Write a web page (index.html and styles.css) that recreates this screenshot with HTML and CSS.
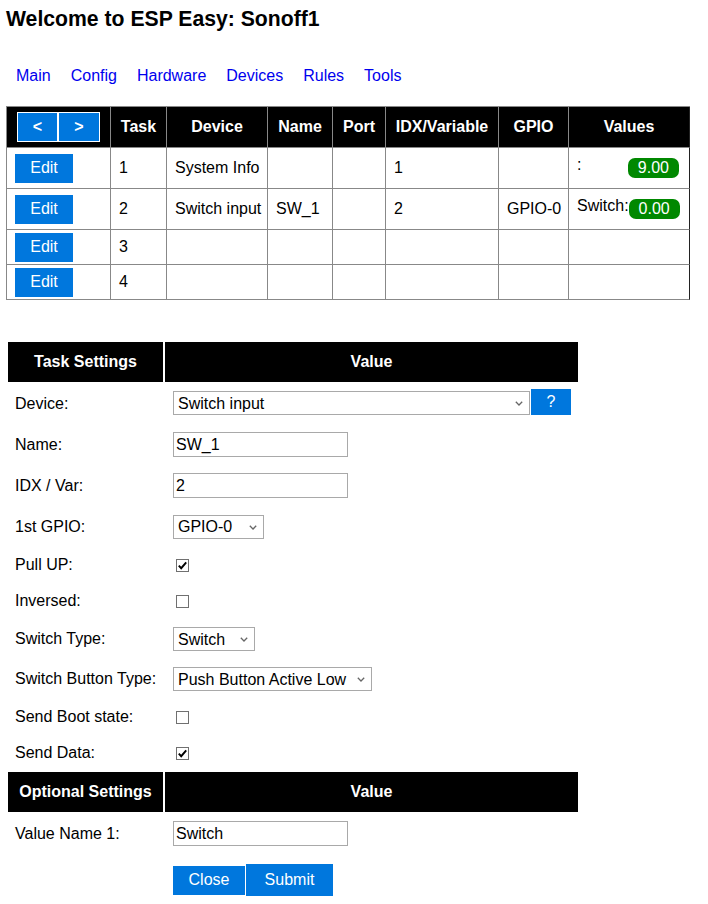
FILE: index.html
```html
<!DOCTYPE html>
<html>
<head>
<meta charset="utf-8">
<title>ESP Easy: Sonoff1</title>
<link rel="stylesheet" href="styles.css">
</head>
<body>
<div class="page">
  <h1 class="title">Welcome to ESP Easy: Sonoff1</h1>
  <nav class="menu">
    <a href="#">Main</a>
    <a href="#">Config</a>
    <a href="#">Hardware</a>
    <a href="#">Devices</a>
    <a href="#">Rules</a>
    <a href="#">Tools</a>
  </nav>

  <table class="tasks">
    <tr class="head">
      <th class="w-nav"><span class="pager"><a class="pg" href="#">&lt;</a><a class="pg" href="#">&gt;</a></span></th>
      <th class="w-task">Task</th>
      <th class="w-dev">Device</th>
      <th class="w-name">Name</th>
      <th class="w-port">Port</th>
      <th class="w-idx">IDX/Variable</th>
      <th class="w-gpio">GPIO</th>
      <th class="w-val last">Values</th>
    </tr>
    <tr class="tall">
      <td><a class="btn edit" href="#">Edit</a></td>
      <td>1</td>
      <td>System Info</td>
      <td></td>
      <td></td>
      <td>1</td>
      <td></td>
      <td class="last"><div class="vals"><span class="vl">:</span><span class="badge">9.00</span></div></td>
    </tr>
    <tr class="tall">
      <td><a class="btn edit" href="#">Edit</a></td>
      <td>2</td>
      <td>Switch input</td>
      <td>SW_1</td>
      <td></td>
      <td>2</td>
      <td>GPIO-0</td>
      <td class="last"><div class="vals"><span class="vl">Switch:</span><span class="badge">0.00</span></div></td>
    </tr>
    <tr class="short">
      <td><a class="btn edit" href="#">Edit</a></td>
      <td>3</td>
      <td></td><td></td><td></td><td></td><td></td><td class="last"></td>
    </tr>
    <tr class="short">
      <td><a class="btn edit" href="#">Edit</a></td>
      <td>4</td>
      <td></td><td></td><td></td><td></td><td></td><td class="last"></td>
    </tr>
  </table>

  <table class="settings">
    <tr><th class="s-lab">Task Settings</th><th class="s-val">Value</th></tr>
    <tr>
      <td>Device:</td>
      <td><div class="ctl ctl-dev"><span class="selwrap"><select class="sel sel-dev"><option>Switch input</option></select><svg class="chev" width="8" height="5" viewBox="0 0 8 5"><path d="M0.8 0.8 L4 4 L7.2 0.8" fill="none" stroke="#666" stroke-width="1.3"/></svg></span><a class="btn help" href="#">?</a></div></td>
    </tr>
    <tr>
      <td>Name:</td>
      <td><div class="ctl ctl-in"><input class="txt" type="text" value="SW_1"></div></td>
    </tr>
    <tr>
      <td>IDX / Var:</td>
      <td><div class="ctl ctl-in"><input class="txt" type="text" value="2"></div></td>
    </tr>
    <tr>
      <td>1st GPIO:</td>
      <td><div class="ctl ctl-sel ctl-gpio"><span class="selwrap"><select class="sel sel-gpio"><option>GPIO-0</option></select><svg class="chev" width="8" height="5" viewBox="0 0 8 5"><path d="M0.8 0.8 L4 4 L7.2 0.8" fill="none" stroke="#666" stroke-width="1.3"/></svg></span></div></td>
    </tr>
    <tr>
      <td>Pull UP:</td>
      <td><div class="ctl ctl-chk"><span class="chk"><svg width="13" height="13" viewBox="0 0 13 13"><rect x="0.5" y="0.5" width="12" height="12" fill="#fff" stroke="#707070"/><path d="M2.8 6.6 L5.2 9.2 L10.2 3.4" fill="none" stroke="#000" stroke-width="1.9"/></svg></span></div></td>
    </tr>
    <tr>
      <td>Inversed:</td>
      <td><div class="ctl ctl-chk"><span class="chk"><svg width="13" height="13" viewBox="0 0 13 13"><rect x="0.5" y="0.5" width="12" height="12" fill="#fff" stroke="#707070"/></svg></span></div></td>
    </tr>
    <tr>
      <td>Switch Type:</td>
      <td><div class="ctl ctl-sel"><span class="selwrap"><select class="sel sel-type"><option>Switch</option></select><svg class="chev" width="8" height="5" viewBox="0 0 8 5"><path d="M0.8 0.8 L4 4 L7.2 0.8" fill="none" stroke="#666" stroke-width="1.3"/></svg></span></div></td>
    </tr>
    <tr>
      <td>Switch Button Type:</td>
      <td><div class="ctl ctl-sel"><span class="selwrap"><select class="sel sel-btn"><option>Push Button Active Low</option></select><svg class="chev" width="8" height="5" viewBox="0 0 8 5"><path d="M0.8 0.8 L4 4 L7.2 0.8" fill="none" stroke="#666" stroke-width="1.3"/></svg></span></div></td>
    </tr>
    <tr>
      <td>Send Boot state:</td>
      <td><div class="ctl ctl-chk"><span class="chk"><svg width="13" height="13" viewBox="0 0 13 13"><rect x="0.5" y="0.5" width="12" height="12" fill="#fff" stroke="#707070"/></svg></span></div></td>
    </tr>
    <tr>
      <td>Send Data:</td>
      <td><div class="ctl ctl-chk"><span class="chk"><svg width="13" height="13" viewBox="0 0 13 13"><rect x="0.5" y="0.5" width="12" height="12" fill="#fff" stroke="#707070"/><path d="M2.8 6.6 L5.2 9.2 L10.2 3.4" fill="none" stroke="#000" stroke-width="1.9"/></svg></span></div></td>
    </tr>
    <tr><th class="s-lab">Optional Settings</th><th class="s-val">Value</th></tr>
    <tr>
      <td>Value Name 1:</td>
      <td><div class="ctl ctl-in"><input class="txt" type="text" value="Switch"></div></td>
    </tr>
    <tr>
      <td></td>
      <td><div class="ctl ctl-btns"><a class="btn close" href="#">Close</a><a class="btn submit" href="#">Submit</a></div></td>
    </tr>
  </table>
</div>
</body>
</html>
```

FILE: styles.css
```css
html, body {
  margin: 0;
  padding: 0;
  background: #fff;
}

body {
  font-family: "Liberation Sans", Arial, sans-serif;
  font-size: 16px;
  color: #000;
}

.page {
  padding: 0 6px;
}

.title {
  margin: 7px 0 0;
  font-size: 21.2px;
  line-height: 24px;
  font-weight: bold;
}

.menu {
  display: flex;
  gap: 20px;
  margin-top: 36px;
  padding-left: 10px;
  line-height: 18px;
}

.menu a {
  color: #0000ee;
  text-decoration: none;
}

.btn {
  display: inline-flex;
  align-items: center;
  justify-content: center;
  box-sizing: border-box;
  background: #0077dd;
  color: #fff;
  text-decoration: none;
  font-size: 16px;
}

/* ---------- task table ---------- */
.tasks {
  margin-top: 21px;
  border-collapse: separate;
  border-spacing: 0;
  table-layout: fixed;
  width: 684px;
  border-left: 1px solid #888;
  border-top: 1px solid #888;
}

.tasks th,
.tasks td {
  box-sizing: border-box;
  border-right: 1px solid #888;
  border-bottom: 1px solid #888;
  padding: 0 8px;
  vertical-align: middle;
  text-align: left;
  white-space: nowrap;
}

.tasks th {
  background: #000;
  color: #fff;
  font-weight: bold;
  text-align: center;
  height: 41px;
  padding: 0 2px;
}

.tasks .last {
  border-right-color: #222;
}

.tasks .tall td { height: 41px; }
.tasks .short td { height: 35px; }

.w-nav { width: 104px; }
.w-task { width: 56px; }
.w-dev { width: 101px; }
.w-name { width: 65px; }
.w-port { width: 53px; }
.w-idx { width: 113px; }
.w-gpio { width: 70px; }
.w-val { width: 121px; }

.pager {
  display: inline-flex;
  vertical-align: middle;
}

.pg {
  display: inline-flex;
  align-items: center;
  justify-content: center;
  box-sizing: border-box;
  width: 41px;
  height: 30px;
  border: 1px solid #fff;
  background: #0077dd;
  color: #fff;
  font-weight: bold;
  text-decoration: none;
}

.pg + .pg {
  width: 42px;
}

.edit {
  width: 58px;
  height: 29px;
  vertical-align: middle;
}

.vals {
  display: flex;
  justify-content: space-between;
  align-items: flex-start;
  height: 24px;
  line-height: 18px;
}

.badge {
  margin: 2px 2px 0 0;
  padding: 1px 10px;
  line-height: 18px;
  border-radius: 7px;
  background: #008800;
  color: #fff;
}

/* ---------- settings table ---------- */
.settings {
  margin-top: 40px;
  border-collapse: separate;
  border-spacing: 2px;
  table-layout: fixed;
  width: 574px;
}

.settings th {
  background: #000;
  color: #fff;
  font-weight: bold;
  text-align: center;
  height: 40px;
  padding: 0;
  box-sizing: border-box;
}

.s-lab { width: 155px; }
.s-val { width: 413px; }

.settings td {
  padding: 7px;
  vertical-align: middle;
  white-space: nowrap;
}

.ctl {
  display: flex;
  align-items: center;
}

.ctl-in { height: 25px; }
.ctl-sel { height: 24px; }
.ctl-gpio { height: 25px; }
.ctl-chk { height: 20px; }
.ctl-dev { height: 25px; align-items: flex-start; }
.ctl-btns { height: 36px; }

.txt {
  box-sizing: border-box;
  width: 175px;
  height: 25px;
  margin: 0 0 0 1px;
  padding: 0 2px;
  border: 1px solid #a9a9a9;
  background: #fff;
  font-family: "Liberation Sans", Arial, sans-serif;
  font-size: 16px;
  color: #000;
  outline: none;
}

.selwrap {
  position: relative;
  display: inline-flex;
  margin-left: 1px;
}

.sel {
  -webkit-appearance: none;
  appearance: none;
  box-sizing: border-box;
  height: 24px;
  margin: 0;
  padding: 0 16px 0 4px;
  border: 1px solid #a9a9a9;
  border-radius: 0;
  background-color: #fff;
  font-family: "Liberation Sans", Arial, sans-serif;
  font-size: 16px;
  color: #000;
}

.chev {
  position: absolute;
  right: 7px;
  top: 10px;
  pointer-events: none;
}

.sel-dev { width: 357px; }
.sel-gpio { width: 91px; }
.sel-type { width: 82px; }
.sel-btn { width: 199px; }

.help {
  width: 40px;
  height: 26px;
  margin: -2px 0 0 1px;
}

.chk {
  display: inline-flex;
  margin-left: 4px;
}

.close {
  width: 72px;
  height: 29px;
  margin-left: 1px;
}

.submit {
  width: 87px;
  height: 32px;
  margin-left: 1px;
}
```
